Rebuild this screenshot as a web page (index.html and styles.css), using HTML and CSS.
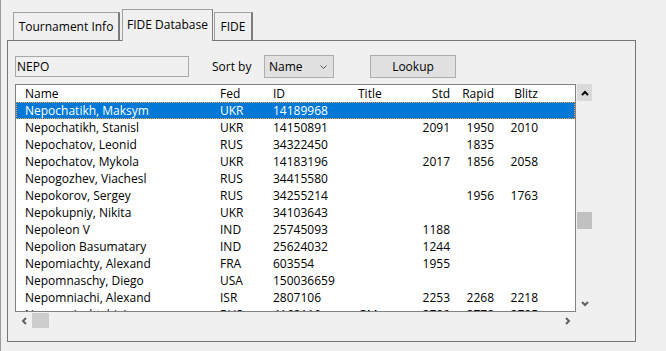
FILE: index.html
```html
<!DOCTYPE html>
<html>
<head>
<meta charset="utf-8">
<link rel="stylesheet" href="styles.css">
</head>
<body>
<div class="window">
  <div class="tabs">
    <div class="tab t1">Tournament Info</div>
    <div class="tab t2 active">FIDE Database</div>
    <div class="tab t3">FIDE</div>
  </div>
  <div class="panel">
    <div class="controls">
      <div class="search">NEPO</div>
      <span class="label">Sort by</span>
      <div class="select"><span>Name</span><svg class="chev" width="7" height="4" viewBox="0 0 7 4"><polyline points="0.5,0.5 3.5,3.5 6.5,0.5" fill="none" stroke="#555" stroke-width="1"/></svg></div>
      <div class="btn">Lookup</div>
    </div>
    <div class="listarea">
      <div class="list">
        <div class="row head"><span class="c-name">Name</span><span class="c-fed">Fed</span><span class="c-id">ID</span><span class="c-title">Title</span><span class="c-num">Std</span><span class="c-num">Rapid</span><span class="c-num">Blitz</span><span></span></div>
        <div class="row sel"><span class="c-name">Nepochatikh, Maksym</span><span class="c-fed">UKR</span><span class="c-id">14189968</span><span class="c-title"></span><span class="c-num"></span><span class="c-num"></span><span class="c-num"></span><span></span></div>
        <div class="row"><span class="c-name">Nepochatikh, Stanisl</span><span class="c-fed">UKR</span><span class="c-id">14150891</span><span class="c-title"></span><span class="c-num">2091</span><span class="c-num">1950</span><span class="c-num">2010</span><span></span></div>
        <div class="row"><span class="c-name">Nepochatov, Leonid</span><span class="c-fed">RUS</span><span class="c-id">34322450</span><span class="c-title"></span><span class="c-num"></span><span class="c-num">1835</span><span class="c-num"></span><span></span></div>
        <div class="row"><span class="c-name">Nepochatov, Mykola</span><span class="c-fed">UKR</span><span class="c-id">14183196</span><span class="c-title"></span><span class="c-num">2017</span><span class="c-num">1856</span><span class="c-num">2058</span><span></span></div>
        <div class="row"><span class="c-name">Nepogozhev, Viachesl</span><span class="c-fed">RUS</span><span class="c-id">34415580</span><span class="c-title"></span><span class="c-num"></span><span class="c-num"></span><span class="c-num"></span><span></span></div>
        <div class="row"><span class="c-name">Nepokorov, Sergey</span><span class="c-fed">RUS</span><span class="c-id">34255214</span><span class="c-title"></span><span class="c-num"></span><span class="c-num">1956</span><span class="c-num">1763</span><span></span></div>
        <div class="row"><span class="c-name">Nepokupniy, Nikita</span><span class="c-fed">UKR</span><span class="c-id">34103643</span><span class="c-title"></span><span class="c-num"></span><span class="c-num"></span><span class="c-num"></span><span></span></div>
        <div class="row"><span class="c-name">Nepoleon V</span><span class="c-fed">IND</span><span class="c-id">25745093</span><span class="c-title"></span><span class="c-num">1188</span><span class="c-num"></span><span class="c-num"></span><span></span></div>
        <div class="row"><span class="c-name">Nepolion Basumatary</span><span class="c-fed">IND</span><span class="c-id">25624032</span><span class="c-title"></span><span class="c-num">1244</span><span class="c-num"></span><span class="c-num"></span><span></span></div>
        <div class="row"><span class="c-name">Nepomiachty, Alexand</span><span class="c-fed">FRA</span><span class="c-id">603554</span><span class="c-title"></span><span class="c-num">1955</span><span class="c-num"></span><span class="c-num"></span><span></span></div>
        <div class="row"><span class="c-name">Nepomnaschy, Diego</span><span class="c-fed">USA</span><span class="c-id">150036659</span><span class="c-title"></span><span class="c-num"></span><span class="c-num"></span><span class="c-num"></span><span></span></div>
        <div class="row"><span class="c-name">Nepomniachi, Alexand</span><span class="c-fed">ISR</span><span class="c-id">2807106</span><span class="c-title"></span><span class="c-num">2253</span><span class="c-num">2268</span><span class="c-num">2218</span><span></span></div>
        <div class="row"><span class="c-name">Nepomniachtchi, Ian</span><span class="c-fed">RUS</span><span class="c-id">4168119</span><span class="c-title">GM</span><span class="c-num">2789</span><span class="c-num">2778</span><span class="c-num">2785</span><span></span></div>
      </div>
      <div class="vscroll">
        <div class="sbtn up"><svg width="8" height="6" viewBox="0 0 8 6"><polyline points="1,5 4,2 7,5" fill="none" stroke="#000" stroke-width="2"/></svg></div>
        <div class="vthumb"></div>
        <div class="sbtn down"><svg width="8" height="6" viewBox="0 0 8 6"><polyline points="1,1 4,4 7,1" fill="none" stroke="#606060" stroke-width="2"/></svg></div>
      </div>
      <div class="hscroll">
        <div class="hbtn left"><svg width="6" height="8" viewBox="0 0 6 8"><polyline points="5,1 2,4 5,7" fill="none" stroke="#606060" stroke-width="2"/></svg></div>
        <div class="hthumb"></div>
        <div class="hbtn right"><svg width="6" height="8" viewBox="0 0 6 8"><polyline points="1,1 4,4 1,7" fill="none" stroke="#606060" stroke-width="2"/></svg></div>
      </div>
    </div>
  </div>
</div>
</body>
</html>
```

FILE: styles.css
```css
html, body {
  margin: 0;
  padding: 0;
}
body {
  background: #f0f0f0;
  font-family: "Open Sans", "Noto Sans", sans-serif;
  font-size: 12px;
  color: #000;
  border-left: 1px solid #9a9a9a;
  height: 351px;
  box-sizing: border-box;
  overflow: hidden;
}
.window {
  padding-top: 9px;
  padding-left: 6px;
  width: 629px;
}
.tabs {
  display: flex;
  align-items: flex-end;
  height: 31px;
}
.tab {
  box-sizing: border-box;
  display: flex;
  align-items: center;
  justify-content: center;
  height: 28px;
  padding-bottom: 1px;
  background: #f0f0f0;
  border: 1px solid #a0a0a0;
  border-bottom: none;
  border-right: 2px solid #7c7c7c;
  white-space: nowrap;
}
.t1 { width: 107px; margin-left: 6px; }
.t2 { width: 91px; margin-left: 2px; }
.t3 { width: 39px; margin-left: 1px; }
.tab.active {
  height: 32px;
  margin-bottom: -1px;
  position: relative;
  z-index: 1;
  border-right: 1px solid #7c7c7c;
  padding-bottom: 3px;
}
.panel {
  box-sizing: border-box;
  height: 302px;
  border: 1px solid #777;
  padding: 14px 0 0 7px;
}
.controls {
  display: flex;
  align-items: center;
  height: 23px;
}
.search {
  box-sizing: border-box;
  width: 174px;
  height: 21px;
  border: 1px solid #a8a8a8;
  background: #f0f0f0;
  padding-left: 1px;
  line-height: 19px;
}
.label {
  margin-left: 23px;
  width: 52px;
}
.select {
  box-sizing: border-box;
  width: 70px;
  height: 23px;
  border: 1px solid #adadad;
  background: #e1e1e1;
  display: flex;
  align-items: center;
  justify-content: space-between;
  padding: 0 6px 0 4px;
}
.btn {
  box-sizing: border-box;
  margin-left: 36px;
  width: 86px;
  height: 23px;
  border: 1px solid #adadad;
  background: #e1e1e1;
  display: flex;
  align-items: center;
  justify-content: center;
}
.listarea {
  margin-top: 6px;
  display: grid;
  grid-template-columns: 561px 17px;
  grid-template-rows: 228px 17px;
}
.list {
  box-sizing: border-box;
  border: 1px solid #828282;
  background: #fff;
  overflow: hidden;
}
.row {
  display: grid;
  grid-template-columns: 198px 53px 85px 48px 56px 44px 44px 1fr;
  height: 17px;
  line-height: 17px;
  white-space: nowrap;
}
.c-name { padding-left: 9px; overflow: hidden; }
.c-fed, .c-id, .c-title { padding-left: 6px; }
.c-num { text-align: right; padding-right: 6px; }
.row.sel {
  background: #0078d7;
  color: #fff;
  outline: 1px dotted #f2a040;
  outline-offset: -1px;
}
.vscroll {
  display: flex;
  flex-direction: column;
}
.sbtn {
  width: 15px;
  height: 17px;
  margin-left: 1px;
  display: flex;
  align-items: center;
  justify-content: center;
}
.sbtn.up { background: #dadada; }
.sbtn.down { margin-top: auto; }
.vthumb {
  width: 15px;
  height: 17px;
  margin-left: 1px;
  margin-top: 111px;
  background: #c1c1c1;
}
.hscroll {
  display: flex;
  align-items: stretch;
}
.hbtn {
  width: 17px;
  height: 17px;
  display: flex;
  align-items: center;
  justify-content: center;
}
.hbtn.right { margin-left: auto; }
.hthumb {
  width: 17px;
  height: 15px;
  margin-top: 1px;
  background: #cdcdcd;
}
```
